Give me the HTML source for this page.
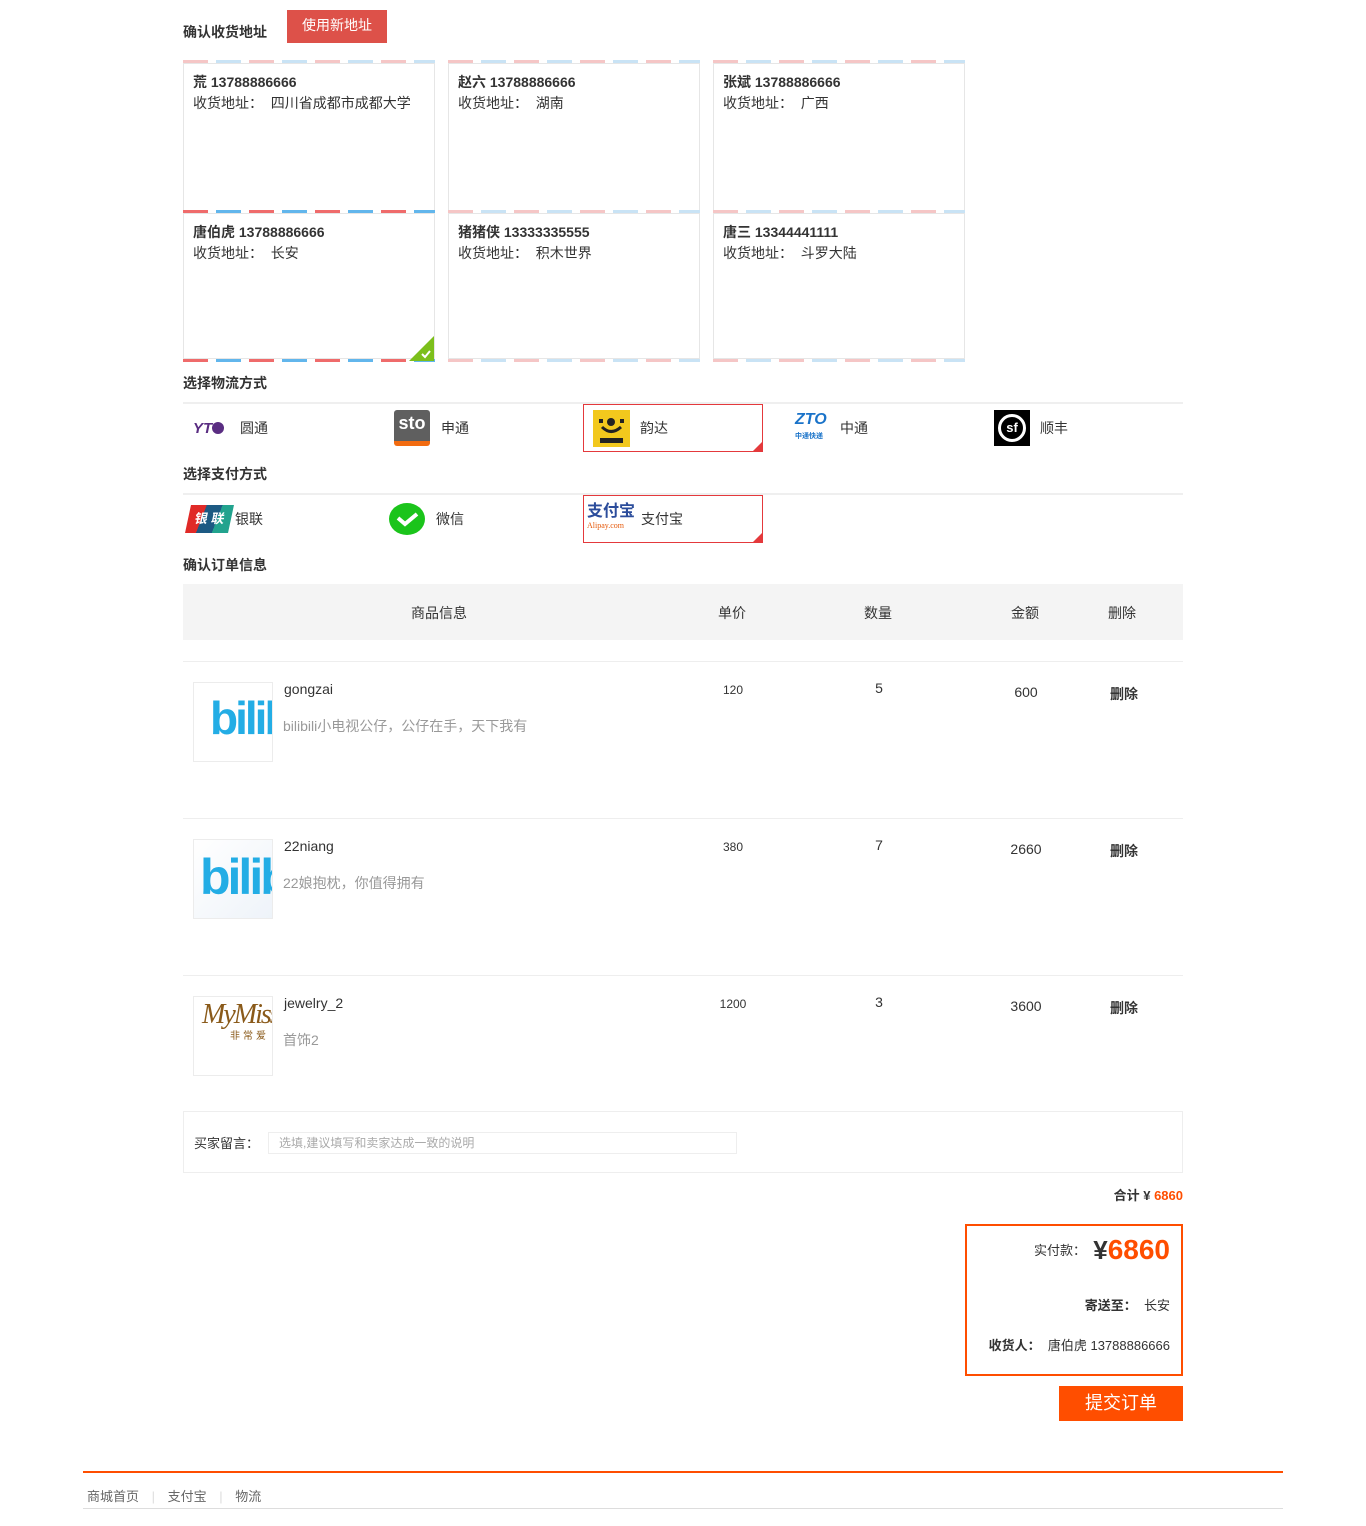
<!DOCTYPE html>
<html><head><meta charset="utf-8">
<style>
*{margin:0;padding:0;box-sizing:border-box}
body{width:1366px;height:1526px;position:relative;background:#fff;font-family:"Liberation Sans","Noto Sans CJK SC",sans-serif;font-size:14px;color:#333;overflow:hidden}
.a{position:absolute}
.h{font-weight:bold;font-size:14px;color:#333}
.card{position:absolute;width:252px;height:150px;border:1px solid #e6e6e6;border-top:none;border-bottom:none}
.card .st{position:absolute;left:-1px;right:-1px;height:4px;background:repeating-linear-gradient(90deg,#f5c6c6 0 25px,transparent 25px 33px,#c9e3f5 33px 58px,transparent 58px 66px);border-bottom:1px solid #e6e6e6}
.card.sel .st{background:repeating-linear-gradient(90deg,#ef6b6b 0 25px,transparent 25px 33px,#62b6ec 33px 58px,transparent 58px 66px)}
.card .t{top:-1px}.card .b{bottom:-1px}
.card .n{position:absolute;left:9px;top:11px;font-weight:bold;font-size:14px}
.card .d{position:absolute;left:9px;top:32px;font-size:14px}
.line{position:absolute;left:183px;width:1000px;height:2px;background:#efefef}
.it{position:absolute;height:48px;width:180px;display:flex;align-items:center;font-size:14px}
.it.sel{border:1px solid #e4393c}
.it.sel:after{content:"";position:absolute;right:0;bottom:0;border-style:solid;border-width:0 0 9px 9px;border-color:transparent transparent #e4393c transparent}
.c{position:absolute;text-align:center;font-size:14px}
.img{position:absolute;left:193px;width:80px;height:80px;border:1px solid #ececec;overflow:hidden;background:#fff}
.bili{position:absolute;font-weight:bold;color:#23ade5;font-size:46px;font-family:"Liberation Sans",sans-serif;letter-spacing:-3px}
</style></head><body>

<div class="a h" style="left:183px;top:22px">确认收货地址</div>
<div class="a" style="left:287px;top:10px;width:100px;height:33px;background:#dd5149;color:#fff;font-size:14px;text-align:center;line-height:31px">使用新地址</div>

<div class="card" style="left:183px;top:61px"><div class="st t"></div><div class="n">荒 13788886666</div><div class="d">收货地址：&nbsp; 四川省成都市成都大学</div></div>
<div class="card" style="left:448px;top:61px"><div class="st t"></div><div class="n">赵六 13788886666</div><div class="d">收货地址：&nbsp; 湖南</div></div>
<div class="card" style="left:713px;top:61px"><div class="st t"></div><div class="n">张斌 13788886666</div><div class="d">收货地址：&nbsp; 广西</div></div>
<div class="card sel" style="left:183px;top:211px"><div class="st t"></div><div class="st b" style="border-bottom:none;border-top:1px solid #e6e6e6"></div><div class="n">唐伯虎 13788886666</div><div class="d">收货地址：&nbsp; 长安</div>
<div style="position:absolute;right:0;bottom:0;border-style:solid;border-width:0 0 25px 25px;border-color:transparent transparent #7cbf1b transparent"></div>
<svg class="a" style="right:2px;bottom:2px" width="12" height="10" viewBox="0 0 12 10"><path d="M2 5l3 3 5-6" stroke="#fff" stroke-width="2" fill="none"/></svg></div>
<div class="card" style="left:448px;top:211px"><div class="st t"></div><div class="st b" style="border-bottom:none;border-top:1px solid #e6e6e6"></div><div class="n">猪猪侠 13333335555</div><div class="d">收货地址：&nbsp; 积木世界</div></div>
<div class="card" style="left:713px;top:211px"><div class="st t"></div><div class="st b" style="border-bottom:none;border-top:1px solid #e6e6e6"></div><div class="n">唐三 13344441111</div><div class="d">收货地址：&nbsp; 斗罗大陆</div></div>

<div class="a h" style="left:183px;top:373px">选择物流方式</div>
<div class="line" style="top:402px"></div>
<div class="it" style="left:183px;top:404px"><span style="margin-left:10px;font-weight:bold;font-style:italic;color:#5a2d82;font-size:15px;width:36px">YT<span style="display:inline-block;width:12px;height:12px;border-radius:6px;background:#5a2d82;vertical-align:-1px"></span></span><span style="margin-left:11px">圆通</span></div>
<div class="it" style="left:383px;top:404px"><span style="margin-left:11px;width:36px;height:36px;background:#5f5f5f;border-radius:3px;border-bottom:5px solid #f26b10;color:#fff;font-weight:bold;font-size:18px;text-align:center;line-height:26px">sto</span><span style="margin-left:11px">申通</span></div>
<div class="it sel" style="left:583px;top:404px"><span style="margin-left:9px;width:37px;height:37px;background:#f2c81d;position:relative"><svg width="37" height="37"><circle cx="18" cy="12" r="4" fill="#222"/><rect x="6" y="9" width="4" height="4" fill="#222"/><rect x="27" y="9" width="4" height="4" fill="#222"/><path d="M9 17q9 9 19 0" stroke="#222" stroke-width="3" fill="none"/><rect x="7" y="28" width="23" height="5" fill="#222"/></svg></span><span style="margin-left:10px">韵达</span></div>
<div class="it" style="left:783px;top:404px"><span style="margin-left:12px;width:36px;color:#1a73c9;font-weight:bold;font-style:italic;font-size:16px;line-height:14px">ZTO<br><span style="font-size:7px;font-style:normal">中通快递</span></span><span style="margin-left:9px">中通</span></div>
<div class="it" style="left:983px;top:404px"><span style="margin-left:11px;width:36px;height:36px;background:#000;display:flex;align-items:center;justify-content:center"><span style="width:28px;height:28px;border:3px solid #fff;border-radius:50%;color:#fff;font-weight:bold;font-size:13px;text-align:center;line-height:22px">sf</span></span><span style="margin-left:10px">顺丰</span></div>

<div class="a h" style="left:183px;top:464px">选择支付方式</div>
<div class="line" style="top:493px"></div>
<div class="it" style="left:183px;top:495px"><span style="margin-left:5px;width:43px;height:28px;background:linear-gradient(100deg,#e02a27 0 33%,#1d5a83 33% 66%,#22a38e 66%);transform:skewX(-12deg);color:#fff;font-weight:bold;font-size:13px;text-align:center;line-height:28px">银 联</span><span style="margin-left:4px">银联</span></div>
<div class="it" style="left:383px;top:495px"><span style="margin-left:6px;width:36px;height:32px;border-radius:50%;background:#1bc41b;position:relative"><svg width="36" height="32"><path d="M9 15l7 6 12-10" stroke="#fff" stroke-width="4" fill="none"/></svg></span><span style="margin-left:11px">微信</span></div>
<div class="it sel" style="left:583px;top:495px"><span style="margin-left:3px;width:52px;line-height:12px;color:#2b4c9b;font-weight:bold;font-size:16px">支付宝<br><span style="font-size:8px;color:#e65a0c;font-weight:normal;font-family:'Liberation Serif',serif">Alipay.com</span></span><span style="margin-left:2px">支付宝</span></div>

<div class="a h" style="left:183px;top:555px">确认订单信息</div>
<div class="a" style="left:183px;top:584px;width:1000px;height:56px;background:#f4f4f4"></div>
<div class="c" style="left:339px;width:200px;top:603px">商品信息</div>
<div class="c" style="left:692px;width:80px;top:603px">单价</div>
<div class="c" style="left:838px;width:80px;top:603px">数量</div>
<div class="c" style="left:985px;width:80px;top:603px">金额</div>
<div class="c" style="left:1082px;width:80px;top:603px">删除</div>
<div class="a" style="left:183px;top:661px;width:1000px;height:1px;background:#eee"></div>
<div class="a" style="left:183px;top:818px;width:1000px;height:1px;background:#eee"></div>
<div class="a" style="left:183px;top:975px;width:1000px;height:1px;background:#eee"></div>

<div class="img" style="top:682px"><span class="bili" style="left:16px;top:8px">bilib</span></div>
<div class="a" style="left:284px;top:681px;font-size:14px">gongzai</div>
<div class="a" style="left:283px;top:716px;color:#999">bilibili小电视公仔，公仔在手，天下我有</div>
<div class="c" style="left:693px;width:80px;top:683px;font-size:12px">120</div>
<div class="c" style="left:839px;width:80px;top:680px">5</div>
<div class="c" style="left:986px;width:80px;top:684px;font-size:14px">600</div>
<div class="c" style="left:1084px;width:80px;top:684px;font-weight:bold">删除</div>

<div class="img" style="top:839px;background:linear-gradient(135deg,#fff,#eef3f9)"><span class="bili" style="left:6px;top:8px;font-size:50px">bilib</span></div>
<div class="a" style="left:284px;top:838px;font-size:14px">22niang</div>
<div class="a" style="left:283px;top:873px;color:#999">22娘抱枕，你值得拥有</div>
<div class="c" style="left:693px;width:80px;top:840px;font-size:12px">380</div>
<div class="c" style="left:839px;width:80px;top:837px">7</div>
<div class="c" style="left:986px;width:80px;top:841px;font-size:14px">2660</div>
<div class="c" style="left:1084px;width:80px;top:841px;font-weight:bold">删除</div>

<div class="img" style="top:996px"><span class="a" style="left:8px;top:2px;color:#8a5a1a;font-style:italic;font-size:28px;letter-spacing:-2px;font-family:'Liberation Serif',serif">MyMiss</span><span class="a" style="left:36px;top:30px;color:#8a5a1a;font-size:10px;letter-spacing:3px">非常爱</span></div>
<div class="a" style="left:284px;top:995px;font-size:14px">jewelry_2</div>
<div class="a" style="left:283px;top:1030px;color:#999">首饰2</div>
<div class="c" style="left:693px;width:80px;top:997px;font-size:12px">1200</div>
<div class="c" style="left:839px;width:80px;top:994px">3</div>
<div class="c" style="left:986px;width:80px;top:998px;font-size:14px">3600</div>
<div class="c" style="left:1084px;width:80px;top:998px;font-weight:bold">删除</div>

<div class="a" style="left:183px;top:1111px;width:1000px;height:62px;border:1px solid #eee"></div>
<div class="a" style="left:194px;top:1133px;font-size:13px">买家留言：</div>
<div class="a" style="left:268px;top:1132px;width:469px;height:22px;border:1px solid #eee;color:#aaa;font-size:12px;padding-left:10px;line-height:20px">选填,建议填写和卖家达成一致的说明</div>

<div class="a" style="right:183px;top:1185px;font-weight:bold;font-size:13px">合计 ¥ <span style="color:#ff4e00">6860</span></div>
<div class="a" style="left:965px;top:1224px;width:218px;height:152px;border:2px solid #ff4e00"></div>
<div class="a" style="right:196px;top:1234px;white-space:nowrap"><span style="font-size:13px;vertical-align:4px">实付款：</span><span style="font-size:26px;font-weight:bold"> ¥</span><span style="font-size:28px;font-weight:bold;color:#ff4e00">6860</span></div>
<div class="a" style="right:196px;top:1295px;font-size:13px"><b>寄送至：</b>&nbsp; 长安</div>
<div class="a" style="right:196px;top:1335px;font-size:13px"><b>收货人：</b>&nbsp; 唐伯虎 13788886666</div>
<div class="a" style="left:1059px;top:1386px;width:124px;height:35px;background:#ff4e00;color:#fff;font-size:18px;text-align:center;line-height:35px">提交订单</div>

<div class="a" style="left:83px;top:1471px;width:1200px;height:2px;background:#ff4e00"></div>
<div class="a" style="left:87px;top:1486px;color:#666;font-size:13px">商城首页 <span style="color:#ddd;margin:0 9px">|</span> 支付宝 <span style="color:#ddd;margin:0 9px">|</span> 物流</div>
<div class="a" style="left:83px;top:1508px;width:1200px;height:1px;background:#ddd"></div>
</body></html>
